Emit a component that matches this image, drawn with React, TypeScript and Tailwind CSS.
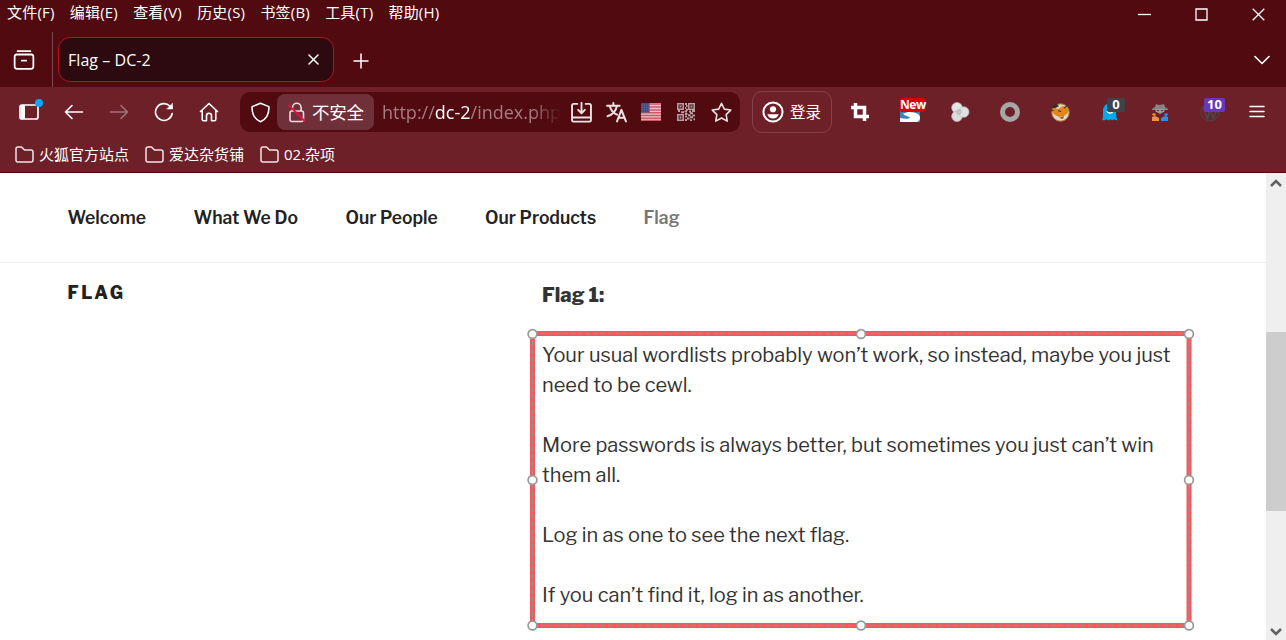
import type { ReactNode } from "react";

const menus = ["文件(F)", "编辑(E)", "查看(V)", "历史(S)", "书签(B)", "工具(T)", "帮助(H)"];

const bookmarks = [
  { label: "火狐官方站点", width: "w-[130px]" },
  { label: "爱达杂货铺", width: "w-[115px]" },
  { label: "02.杂项", width: "w-[90px]" },
];

const navLinks = [
  { label: "Welcome", width: "w-[126px]" },
  { label: "What We Do", width: "w-[152px]" },
  { label: "Our People", width: "w-[139.5px]" },
  { label: "Our Products", width: "w-[158.5px]" },
];

interface IconProps {
  children: ReactNode;
  className?: string;
  size?: number;
  strokeWidth?: number;
}

const Icon = ({ children, className = "", size = 20, strokeWidth = 1.6 }: IconProps) => (
  <svg
    width={size}
    height={size}
    viewBox="0 0 20 20"
    fill="none"
    stroke="currentColor"
    strokeWidth={strokeWidth}
    strokeLinecap="round"
    strokeLinejoin="round"
    className={`shrink-0 ${className}`}
  >
    {children}
  </svg>
);

const Cell = ({ children }: { children: ReactNode }) => (
  <div className="flex w-[45px] shrink-0 items-center justify-center">{children}</div>
);

const ExtCell = ({ children }: { children: ReactNode }) => (
  <div className="relative flex w-[50px] shrink-0 items-center justify-center">{children}</div>
);

const MenuBar = () => (
  <div className="flex h-8 items-start justify-between">
    <div className="flex gap-[15.2px] pl-[7px] text-[15px] leading-[25px] tracking-[0.2px]">
      {menus.map((menu) => (
        <span key={menu} className="whitespace-nowrap">
          {menu}
        </span>
      ))}
    </div>
    <div className="flex h-[29px] items-center">
      <div className="flex w-[57px] justify-center">
        <svg width="13" height="13" stroke="currentColor" strokeWidth="1.3">
          <path d="M0 6.5h13" />
        </svg>
      </div>
      <div className="flex w-[57px] justify-center">
        <svg width="13" height="13" fill="none" stroke="currentColor" strokeWidth="1.3">
          <path d="M1 1h11v11H1z" />
        </svg>
      </div>
      <div className="flex w-[56px] justify-center">
        <svg width="13" height="13" stroke="currentColor" strokeWidth="1.3">
          <path d="M.7.7l11.6 11.6M12.3.7L.7 12.3" />
        </svg>
      </div>
    </div>
  </div>
);

const TabBar = () => (
  <div className="flex h-[55px]">
    <div className="flex w-[53px] items-center justify-center border-r border-[#7c4950] pr-1">
      <Icon size={22} strokeWidth={1.6}>
        <path d="M4.2 2h11.6" />
        <rect x="1.5" y="5" width="17" height="13" rx="2" />
        <path d="M8 10.5h4" />
      </Icon>
    </div>
    <div className="mt-[5px] ml-[5px] flex h-[45px] w-[276px] items-center justify-between rounded-xl border border-[#b5121f] bg-[#2c0a0f] pr-[14px] pl-[9px]">
      <span className="text-[16px] tracking-[0.05px]">Flag – DC-2</span>
      <svg width="11" height="11" stroke="currentColor" strokeWidth="1.5" strokeLinecap="round">
        <path d="M1 1l9 9M10 1l-9 9" />
      </svg>
    </div>
    <div className="flex w-[53px] items-center justify-center pt-[2px]">
      <svg width="16" height="16" stroke="currentColor" strokeWidth="1.5" strokeLinecap="round">
        <path d="M8 1v14M1 8h14" />
      </svg>
    </div>
    <div className="ml-auto flex w-12 items-center justify-center">
      <svg width="16" height="10" fill="none" stroke="currentColor" strokeWidth="1.6" strokeLinecap="round" strokeLinejoin="round">
        <path d="M1 1.5l7 7 7-7" />
      </svg>
    </div>
  </div>
);

const FlagIcon = () => (
  <svg width="20" height="18" className="shrink-0">
    <rect width="20" height="18" fill="#e7c3cc" />
    <path d="M0 1h20M0 4h20M0 7h20M0 9.7h20M0 12.5h20M0 15.2h20M0 17.5h20" stroke="#cf5865" strokeWidth="1.4" />
    <rect width="8.5" height="9.5" fill="#474d82" />
    <path d="M1 2h7M1 4.5h7M1 7h7" stroke="#777ba2" strokeWidth="0.6" strokeDasharray="1 1" />
  </svg>
);

const QrIcon = () => (
  <svg width="18" height="18" viewBox="0 0 18 18" className="shrink-0 text-[#b8a1a4]" fill="none" stroke="currentColor" strokeWidth="1.5">
    <path d="M.8.8h5.4v5.4H.8zM11.8.8h5.4v5.4h-5.4zM.8 11.8h5.4v5.4H.8z" />
    <path
      d="M2.5 3.5h2M13.5 3.5h2M2.5 14.5h2M8 1h2M9 3h1.5M8 5h1.2M9 6.8h2M1 8h2M4 9.3h3M7.5 8.5h2.5M12 8.5h2M15 8h3M13 10.3h3M8 11h2.5M11 12.2h2.5M15.5 12.5h2.5M8 13.5h2M13 14.3h3M10 15.5h2.5M8 17h2M13 17.2h2M16.5 16.3h1.5"
      strokeWidth="2"
    />
  </svg>
);

const UrlBar = () => (
  <div className="ml-[9px] flex h-10 w-[500px] shrink-0 items-center rounded-[10px] bg-[#500a10]">
    <div className="flex w-[37px] justify-center pl-[3px]">
      <Icon size={21} strokeWidth={1.5}>
        <path d="M10 1.2l8 3.2c.3 6.8-2 11.8-8 14.4C4 16.2 1.7 11.2 2 4.4z" />
      </Icon>
    </div>
    <div className="flex h-9 w-[97px] items-center rounded-lg bg-[#70303a] pl-[11px]">
      <svg width="18" height="21" viewBox="0 0 18 21" fill="none" stroke="#eadfe1" strokeWidth="1.6" className="shrink-0">
        <path d="M4.5 9V5.5a4.3 4.3 0 0 1 8.6 0V9" />
        <rect x="2" y="9" width="13.5" height="10.5" rx="2" />
        <path d="M.5 3l16.5 16.5" stroke="#e3123e" strokeWidth="1.9" />
      </svg>
      <span className="ml-[6px] pt-[1px] text-[17.5px] leading-none whitespace-nowrap tracking-[-0.2px]">不安全</span>
    </div>
    <div className="ml-2 w-[179px] mask-r-from-84% text-[18px] whitespace-nowrap text-[#a87d81]">
      http://<span className="text-white">dc-2</span>/index.php
    </div>
    <div className="flex items-center text-[#eee3e4]">
      <div className="flex w-[35px] justify-center pl-[5px]">
        <Icon size={21} strokeWidth={1.8}>
          <path d="M6 1.8H2.5a1.5 1.5 0 0 0-1.5 1.5V17.2a1.5 1.5 0 0 0 1.5 1.5h15a1.5 1.5 0 0 0 1.5-1.5V3.3a1.5 1.5 0 0 0-1.5-1.5H14M1.5 14.8h17M10 .8v9.5M6.8 7.5L10 10.7l3.2-3.2" />
        </Icon>
      </div>
      <div className="flex w-[35px] justify-center pl-[5px]">
        <Icon size={21} strokeWidth={1.9}>
          <path d="M1 3.5h12M7 1v2.5M3.5 3.5c1 4 4 7.5 7 8.5M10.5 3.5c-1 4.5-4.5 8.5-9 10M10.5 18.5l4.2-11 4.3 11M12 15h5.5" />
        </Icon>
      </div>
      <div className="flex w-[35px] justify-center pl-[5px]">
        <FlagIcon />
      </div>
      <div className="flex w-[35px] justify-center pl-[5px]">
        <QrIcon />
      </div>
      <div className="flex w-[35px] justify-center pl-[5px]">
        <Icon size={21} strokeWidth={1.5}>
          <path d="M10 1.2l2.7 5.6 6.1.9-4.4 4.3 1.1 6.2-5.500-3-5.500 3 1.100-6.200L1.200 7.700l6.100-.9z" />
        </Icon>
      </div>
    </div>
  </div>
);

const Extensions = () => (
  <div className="ml-[3px] flex h-full items-center">
    <ExtCell>
      <svg width="18" height="18" fill="none" stroke="#fff" strokeWidth="3.5">
        <path d="M4.5 0v13.5H18M0 4.5h13.5V18" />
      </svg>
    </ExtCell>
    <ExtCell>
      <svg width="20" height="20" viewBox="0 0 20 20">
        <rect width="20" height="20" fill="#3e83b5" />
        <path d="M5 10c1-1.500 6-1.500 15-.5V8H5z" fill="#fff" />
        <path d="M8 10c5 0 12 1 12 5.500 0 2-1 3.500-3 4.500H0v-4c4 .8 9 1 10-.3.500-1-5-1.500-7-4z" fill="#fff" />
      </svg>
      <span className="absolute top-[-4px] left-[15px] h-[14px] w-[25px] rounded-[2px] bg-[#dc000c] text-center text-[12px] leading-[13px] font-bold tracking-[-0.4px]">
        New
      </span>
    </ExtCell>
    <ExtCell>
      <svg width="20" height="20" viewBox="0 0 20 20" stroke="#bbb" strokeWidth="0.7">
        <circle cx="7" cy="5.8" r="5.3" fill="#e4e4e4" />
        <circle cx="7" cy="14.2" r="5.3" fill="#ddd" />
        <circle cx="13.700" cy="10" r="5.3" fill="#e0e0e0" />
        <circle cx="9" cy="10" r="2.500" fill="#c4c4c4" />
      </svg>
    </ExtCell>
    <ExtCell>
      <svg width="20" height="20">
        <circle cx="10" cy="10" r="7.5" fill="none" stroke="#a7a7a7" strokeWidth="5" />
      </svg>
    </ExtCell>
    <ExtCell>
      <svg width="20" height="20" viewBox="0 0 20 20">
        <circle cx="10.5" cy="10.5" r="8.7" fill="#ded9cd" stroke="#ba752f" />
        <path d="M2 10l3-4 3 1 5-3 5 2v5l-4 3-5 1-4-2z" fill="#e18617" />
        <path d="M2 4l4-2 2 2-4 2zM0 9l4-1M8 8.500l3 1M14 6l3-2" fill="#302a26" stroke="#44311f" strokeWidth="1.2" />
        <path d="M9 16l5-2-1 3z" fill="#a54f08" />
      </svg>
    </ExtCell>
    <ExtCell>
      <svg width="20" height="20" viewBox="0 0 20 20">
        <path d="M3 9C3-1 16-1 16 9c0 4 .3 7 1.5 9-1.7.4-2.5.2-3.5-1-1 1.800-2.500 1.800-3.500 0-1 1.800-3 1.800-4 0-1 1.500-2.500 1.500-4.500 1C3.200 16 3 13 3 9z" fill="#00a9ed" />
        <path d="M7 9c1 3 5 3 6 0" fill="none" stroke="#fff" strokeWidth="1.4" />
      </svg>
      <span className="absolute top-[-4px] left-[22px] h-[14px] w-[18px] rounded-[2px] bg-[#414149] text-center text-[13px] leading-[12px] font-bold">
        0
      </span>
    </ExtCell>
    <ExtCell>
      <svg width="18" height="20" viewBox="0 0 18 20">
        <path d="M4 5l1-3 3 1 2-.2L13 2l1 3 3 2v1H1V7z" fill="#858585" />
        <path d="M4.5 7h9v2.5L9 12 4.5 9.5z" fill="#999" />
        <path d="M6 8.5h2M10 8.5h2" stroke="#444" />
        <path d="M2 11l3 1-1 2 4 2v3H1v-4l3-1-3-1z" fill="#ee9440" />
        <path d="M16 11l-3 1 1 2-4 2v3h7v-4l-2-1 2-1z" fill="#3189f3" />
      </svg>
    </ExtCell>
    <ExtCell>
      <svg width="20" height="20" viewBox="0 0 20 20" fill="none" stroke="#4b4547" strokeWidth="2">
        <circle cx="10" cy="10" r="9" strokeWidth="1" />
        <path d="M3 5l4.5 12L10 8l3.5 9L17 6M2 5h4M8 5h4" />
      </svg>
      <span className="absolute top-[-4px] left-[19px] h-[14px] w-[21px] rounded-[2px] bg-[#6836c1] text-center text-[13px] leading-[12px] font-bold">
        10
      </span>
    </ExtCell>
  </div>
);

const Toolbar = () => (
  <div className="flex h-[50px] items-center pl-[6px]">
    <Cell>
      <div className="relative">
        <svg width="20" height="16" className="block" fill="none" stroke="currentColor" strokeWidth="1.7">
          <rect x="1" y="1" width="18" height="14" rx="2" />
          <path d="M2 1h4v14H2z" fill="currentColor" stroke="none" />
        </svg>
        <span className="absolute -top-[5px] -right-[4px] h-2 w-2 rounded-full bg-[#00aafa]" />
      </div>
    </Cell>
    <Cell>
      <Icon><path d="M18.5 10h-17M8 3.5L1.5 10 8 16.5" /></Icon>
    </Cell>
    <Cell>
      <Icon className="text-[#a0747a]"><path d="M1.5 10h17M12 3.5l6.5 6.5-6.5 6.5" /></Icon>
    </Cell>
    <Cell>
      <Icon>
        <path d="M18.2 11.5A8.4 8.4 0 1 1 15.8 4L18 6.2" />
        <path d="M18.5 1.5v5.5h-5.5z" fill="currentColor" strokeWidth="0.5" />
      </Icon>
    </Cell>
    <Cell>
      <Icon>
        <path d="M1.5 9.5L10 1.5l8.5 8M3.2 8.5v8.7c0 .9.5 1.5 1.4 1.5h2.9v-5a2.5 2.5 0 0 1 5 0v5h2.9c.9 0 1.4-.6 1.4-1.5V8.5" />
      </Icon>
    </Cell>
    <UrlBar />
    <div className="ml-3 flex h-[42px] w-20 shrink-0 items-center rounded-[10px] border border-[#83404a] pl-[9px]">
      <Icon size={22} strokeWidth={1.8}>
        <circle cx="10" cy="10" r="8.7" />
        <circle cx="10" cy="7.5" r="2.8" fill="currentColor" stroke="none" />
        <path d="M4.8 12h10.4c-.8 2.5-2.7 4-5.2 4s-4.4-1.5-5.2-4z" fill="currentColor" stroke="none" />
      </Icon>
      <span className="ml-[6px] pt-[2px] text-[15.5px] whitespace-nowrap">登录</span>
    </div>
    <Extensions />
    <div className="flex w-[44px] shrink-0 justify-center">
      <svg width="16" height="14" stroke="currentColor" strokeWidth="1.5" strokeLinecap="round">
        <path d="M1 1.5h14M1 6.5h14M1 11.5h14" />
      </svg>
    </div>
  </div>
);

const BookmarksBar = () => (
  <div className="flex h-[35px] items-center pl-[15px]">
    {bookmarks.map((bookmark) => (
      <div key={bookmark.label} className={`flex shrink-0 items-center ${bookmark.width}`}>
        <svg width="19" height="17" viewBox="0 0 19 17" fill="none" stroke="#efe3e4" strokeWidth="1.5" strokeLinejoin="round" className="shrink-0">
          <path d="M1 3a2 2 0 0 1 2-2h3.5l3 3H16a2 2 0 0 1 2 2v8a2 2 0 0 1-2 2H3a2 2 0 0 1-2-2z" />
        </svg>
        <span className="ml-[5px] text-[15px] whitespace-nowrap">{bookmark.label}</span>
      </div>
    ))}
  </div>
);

const handles = [
  [7.5, 7], [336, 7], [664, 7],
  [7.5, 153], [664, 153],
  [7.5, 298.5], [336, 298.5], [664, 298.5],
];

// Selection rectangle drawn over the flag text
const SelectionFrame = () => (
  <svg width="672" height="306" className="pointer-events-none absolute -top-[13px] -left-[17px]" fill="none">
    <rect x="7.5" y="6.5" width="656.5" height="292" stroke="#fb5558" strokeWidth="5" />
    <path d="M7.5 6.5H664M7.5 298.5H664M7.5 6.5V298.5M664 6.5V298.5" stroke="#969091" strokeWidth="1.4" strokeDasharray="6 1.5" />
    {handles.map(([x, y]) => (
      <circle key={`${x}-${y}`} cx={x} cy={y} r="4.4" fill="#fff" stroke="#999" strokeWidth="1.7" />
    ))}
  </svg>
);

const Page = () => (
  <main className="min-w-0 flex-1 bg-white font-['Libre_Franklin','Liberation_Sans',sans-serif] text-[#333]">
    <nav className="flex h-[90px] items-center border-b border-[#eee] pt-[2px] pl-[67.5px] text-[17.5px] font-semibold text-[#222]">
      {navLinks.map((link) => (
        <a key={link.label} className={`whitespace-nowrap ${link.width}`}>
          {link.label}
        </a>
      ))}
      <a className="text-[#767676]">Flag</a>
    </nav>
    <div className="flex pl-[67.5px]">
      <h2 className="w-[474.5px] shrink-0 pt-[17px] text-[17.5px] leading-[26px] font-extrabold tracking-[2.5px] text-[#222]">
        FLAG
      </h2>
      <div className="pt-[17px] text-[20px] leading-[30px]">
        <p className="font-extrabold">Flag 1:</p>
        <div className="relative mt-[30px] whitespace-nowrap">
          <SelectionFrame />
          <p className="mb-[30px]">
            Your usual wordlists probably won’t work, so instead, maybe you just
            <br />
            need to be cewl.
          </p>
          <p className="mb-[30px]">
            More passwords is always better, but sometimes you just can’t win
            <br />
            them all.
          </p>
          <p className="mb-[30px]">Log in as one to see the next flag.</p>
          <p>If you can’t find it, log in as another.</p>
        </div>
      </div>
    </div>
  </main>
);

const Scrollbar = () => (
  <div className="flex w-5 shrink-0 flex-col items-center justify-between bg-[#efefef] pt-[6px] pb-[4px] text-[#606060]">
    <svg width="12" height="8" fill="none" stroke="currentColor" strokeWidth="2.5">
      <path d="M1 7l5-5 5 5" />
    </svg>
    <div className="mb-[-28px] h-[179px] w-5 bg-[#cdcdcd]" />
    <svg width="12" height="8" fill="none" stroke="currentColor" strokeWidth="2.5">
      <path d="M1 1l5 5 5-5" />
    </svg>
  </div>
);

export default function App() {
  return (
    <div className="flex h-[640px] w-[1286px] flex-col overflow-hidden font-['Segoe_UI','Open_Sans','Noto_Sans_CJK_SC',sans-serif] text-white">
      <header className="shrink-0">
        <div className="bg-[#500a10]">
          <MenuBar />
          <TabBar />
        </div>
        <div className="border-b border-[#500a10] bg-[#6e2029]">
          <Toolbar />
          <BookmarksBar />
        </div>
      </header>
      <div className="flex min-h-0 flex-1">
        <Page />
        <Scrollbar />
      </div>
    </div>
  );
}
